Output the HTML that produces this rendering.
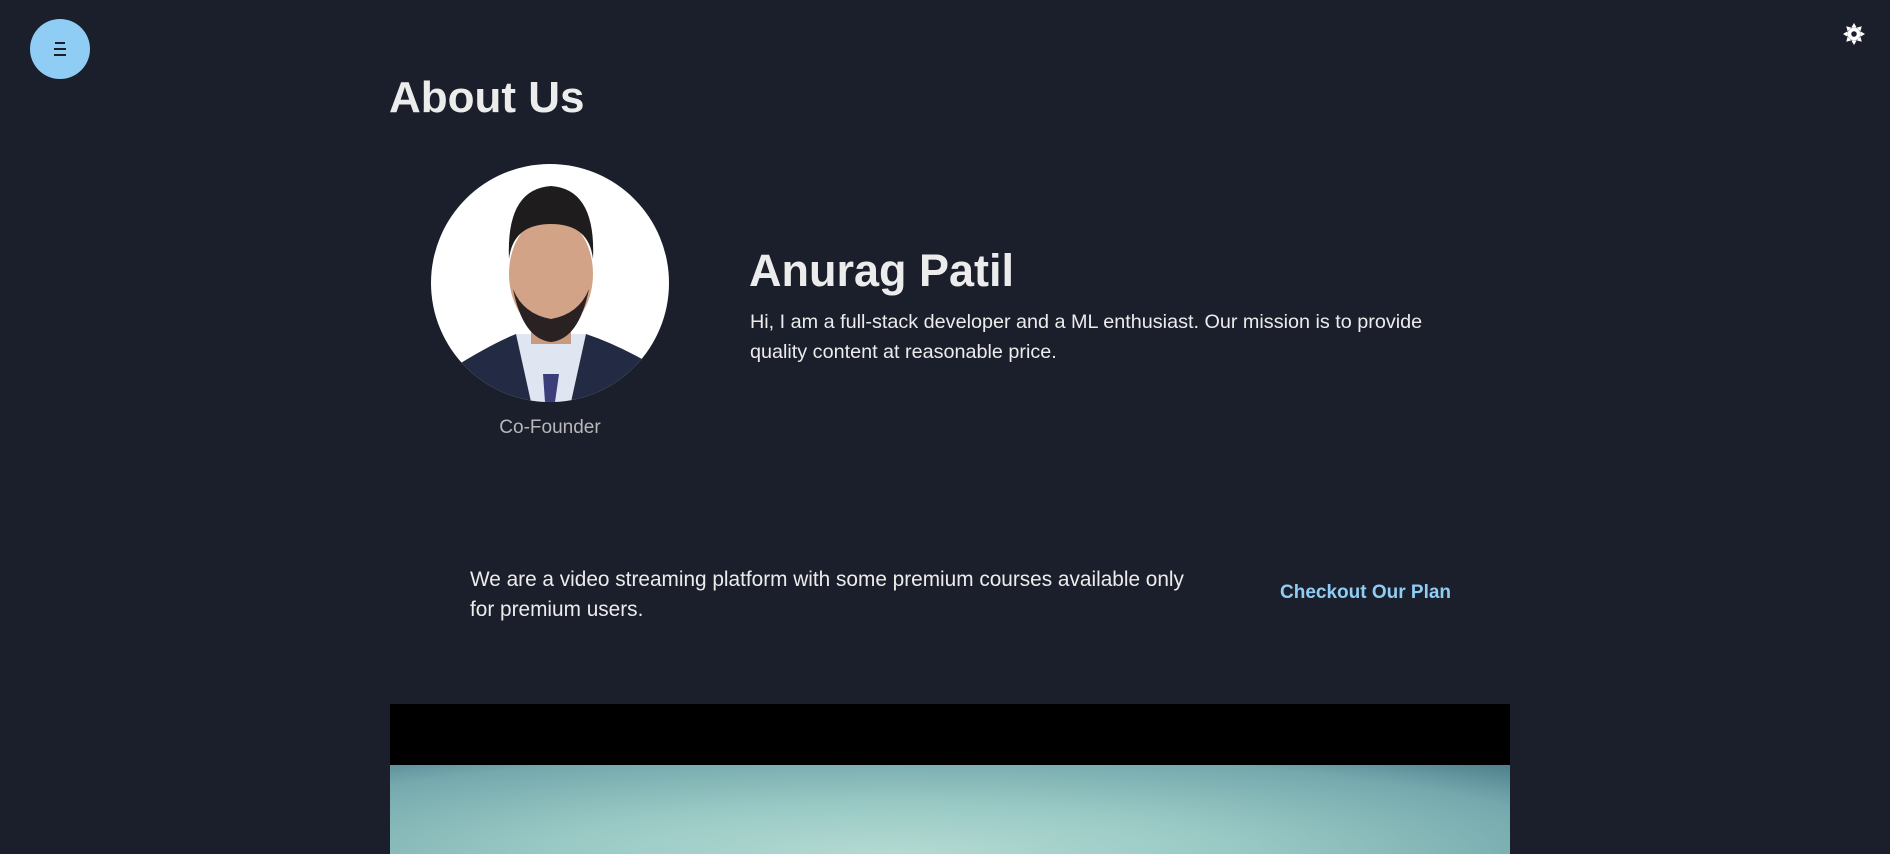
<!DOCTYPE html>
<html><head><meta charset="utf-8"><style>
*{margin:0;padding:0;box-sizing:border-box}
body{width:1890px;height:854px;overflow:hidden;background:#1b1f2b;font-family:"Liberation Sans",sans-serif;color:#ececec;position:relative}
.menu{position:absolute;left:30px;top:19px;width:60px;height:60px;border-radius:50%;background:#8fcdf4}
.menu i{position:absolute;left:24px;height:2px;background:#1b1f2b;width:12px}
.abs{position:absolute;white-space:nowrap}
.photo{position:absolute;left:431px;top:164px;width:238px;height:238px;border-radius:50%;overflow:hidden;background:#fff}
</style></head><body>
<div class="menu"><i style="top:23px;width:10px;left:25px"></i><i style="top:29px"></i><i style="top:35px"></i></div>
<svg class="abs" style="left:1843px;top:23px" width="22" height="22" viewBox="0 0 24 24"><g fill="#fff"><circle cx="12" cy="12" r="7"/><path d="M12 0l3 5h-6zM12 24l-3-5h6zM0 12l5-3v6zM24 12l-5 3v-6zM3.5 3.5l5.5 1.5-4 4zM20.5 20.5l-5.5-1.5 4-4zM20.5 3.5l-1.5 5.5-4-4zM3.5 20.5l1.5-5.5 4 4z"/></g><circle cx="12" cy="12" r="3" fill="#1b1f2b"/></svg>
<div class="abs" style="left:389px;top:73px;font-size:44px;font-weight:bold">About Us</div>
<div class="photo"><svg width="238" height="238" viewBox="0 0 238 238">
<path d="M0 238 L20 205 Q60 180 85 170 L155 170 Q185 180 220 200 L238 238Z" fill="#222a44"/>
<path d="M85 170 L155 170 L140 238 L100 238Z" fill="#dfe6f2"/>
<path d="M112 210 L128 210 L124 238 L114 238Z" fill="#3a3f7a"/>
<rect x="100" y="150" width="40" height="30" fill="#c89a80"/>
<ellipse cx="120" cy="110" rx="42" ry="58" fill="#d2a386"/>
<path d="M78 95 Q75 25 120 22 Q165 25 162 95 Q158 60 120 60 Q82 60 78 95Z" fill="#1f1c1e"/>
<path d="M82 125 Q92 175 120 178 Q148 175 158 125 Q148 150 120 155 Q92 150 82 125Z" fill="#2a2222"/>
</svg></div>
<div class="abs" style="left:431px;width:238px;text-align:center;top:417px;font-size:19px;color:#b8b8b8">Co-Founder</div>
<div class="abs" style="left:749px;top:245px;font-size:45px;font-weight:bold">Anurag Patil</div>
<div class="abs" style="left:750px;top:307px;font-size:19.8px;line-height:30px">Hi, I am a full-stack developer and a ML enthusiast. Our mission is to provide<br>quality content at reasonable price.</div>
<div class="abs" style="left:470px;top:565px;font-size:20.8px;line-height:30px">We are a video streaming platform with some premium courses available only<br>for premium users.</div>
<div class="abs" style="left:1280px;top:582px;font-size:19px;font-weight:bold;color:#8fcdf4">Checkout Our Plan</div>
<div class="abs" style="left:390px;top:704px;width:1120px;height:62px;background:#000"></div>
<div class="abs" style="left:390px;top:765px;width:1120px;height:89px;background:radial-gradient(ellipse at 45% 100%,#b3dad2 0%,#99c9c4 40%,#74a8ad 80%,#4e7f8c 100%)"></div>
</body></html>
